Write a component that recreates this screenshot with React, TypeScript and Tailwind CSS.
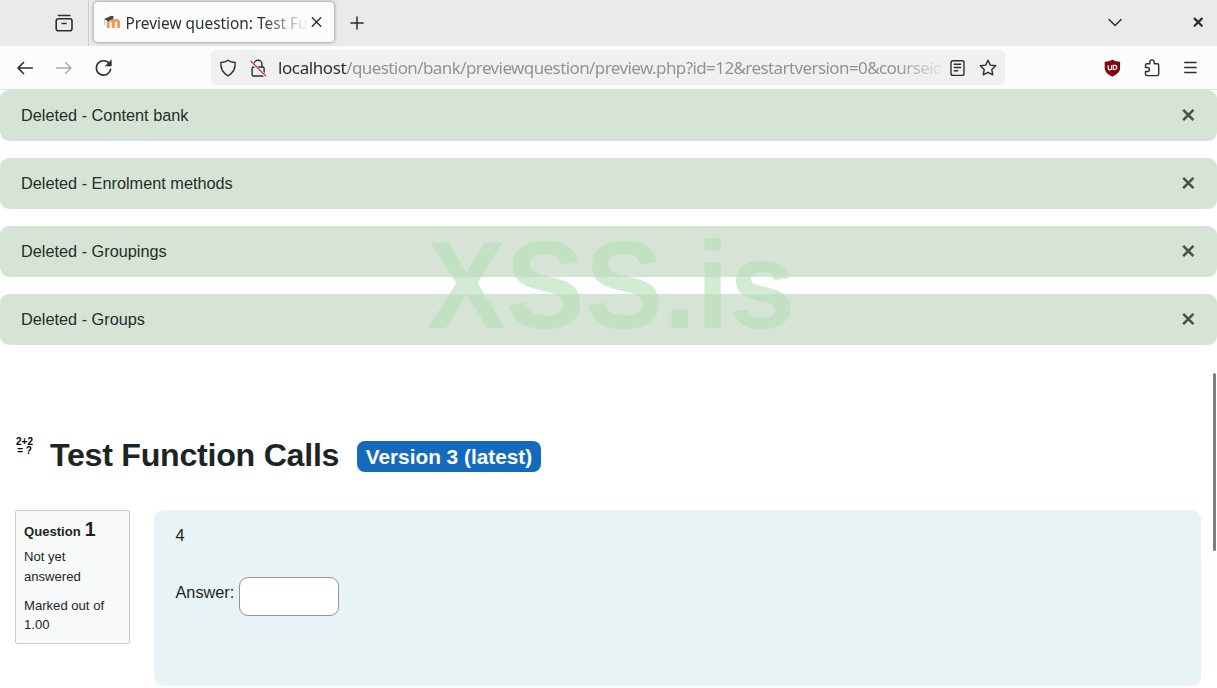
import React from 'react';

const alerts = ['Deleted - Content bank', 'Deleted - Enrolment methods', 'Deleted - Groupings', 'Deleted - Groups'];

interface IconProps {
  className?: string;
  children: React.ReactNode;
}

const Icon: React.FC<IconProps> = ({ className = '', children }) => (
  <svg
    viewBox="0 0 18 18"
    width="18"
    height="18"
    fill="none"
    stroke="currentColor"
    strokeWidth="1.4"
    strokeLinecap="round"
    strokeLinejoin="round"
    className={`shrink-0 ${className}`}
  >
    {children}
  </svg>
);

const MoodleIcon = () => (
  <svg viewBox="0 0 18 14" width="18" height="14" className="shrink-0">
    <path
      d="M5.200 13V8c0-1.800.8-2.700 2.500-2.700S10.300 6.200 10.300 8v5M10.300 8c0-1.800.9-2.700 2.600-2.700S15.600 6.200 15.600 8v5"
      fill="none"
      stroke="#f2995c"
      strokeWidth="3"
    />
    <path d="M1 4.100 8.500.8l2.400.6-1.100 3.200C7.600 4.200 6.400 5 5.500 6.500L3 5.100z" fill="#3f4541" />
    <path d="M1.600 4.800v5" stroke="#a9aeab" strokeWidth=".8" />
  </svg>
);

const TabBar = () => (
  <div className="flex h-[46px] items-center bg-[#eaeaea]">
    <div className="flex h-full w-[89px] items-center border-r border-[#cdcfcd] pl-[55px]">
      <Icon>
        <rect x="1.200" y="4.800" width="15.800" height="12" rx="2.300" strokeWidth="1.600" />
        <path d="M3.300 1.400h11.600" strokeWidth="1.500" />
        <path d="M7.200 9.400h3.800" strokeWidth="1.500" />
      </Icon>
    </div>
    <div className="mb-[2px] ml-[5px] flex h-[40px] w-[240px] items-center rounded-[4px] bg-[#fcfcfc] pl-[9px] shadow-[0_0_3px_1px_rgba(90,110,90,0.5)]">
      <MoodleIcon />
      <div className="mt-[3px] ml-[4.500px] w-[180.500px] overflow-hidden whitespace-nowrap text-[15.400px] [mask-image:linear-gradient(to_right,black_135px,transparent_183px)]">
        Preview question: Test Function Calls
      </div>
      <Icon className="ml-[2px]">
        <path d="m4.300 4.800 8.400 8.400M12.700 4.800l-8.400 8.400" />
      </Icon>
    </div>
    <Icon className="ml-[14px]">
      <path d="M9 2.900v12.200M2.900 9h12.200" strokeWidth="1.500" />
    </Icon>
    <Icon className="ml-auto">
      <path d="m3.100 5.500 6 6 6-6" strokeWidth="1.500" />
    </Icon>
    <Icon className="mr-[10px] ml-[65px]">
      <path d="m5.600 4.600 7.200 7.200M12.800 4.600l-7.200 7.200" strokeWidth="2.200" />
    </Icon>
  </div>
);

const AddressBar = () => (
  <div className="ml-[98px] flex h-[35px] w-[794px] items-center rounded-[5px] bg-[#f0f0f0] pl-[8px]">
    <Icon>
      <path d="M9 1.200c2 1.500 4.300 2.100 7.100 2.300.5 5.300-1.600 10.200-7.100 13.300C3.500 13.700 1.400 8.800 1.900 3.500 4.700 3.300 7 2.700 9 1.200z" />
    </Icon>
    <Icon className="ml-[12px]">
      <rect x="3.100" y="8" width="12" height="9" rx="1.500" />
      <path d="M5 8V5.200a4 4 0 0 1 8 0V8" />
      <path d="m1.600 2.600 14.600 14" stroke="#f0f0f0" strokeWidth="3" />
      <path d="m2 2.200 14.600 14.600" stroke="#d14455" strokeWidth="1.500" />
    </Icon>
    <div className="ml-[11px] w-[663px] overflow-hidden whitespace-nowrap text-[17px] tracking-[-0.590px] text-[#8e9690] [mask-image:linear-gradient(to_right,black_620px,transparent_668px)]">
      <span className="tracking-[-0.400px] text-[#27312d]">localhost</span>
      /question/bank/previewquestion/preview.php?id=12&amp;restartversion=0&amp;courseid=2
    </div>
    <Icon className="ml-[7px]">
      <rect x="3" y="1.800" width="13" height="14.600" rx="2" />
      <path d="M6.300 5.200h6.300M6.300 8.500h6.300M6.300 11.800h3.500" />
    </Icon>
    <Icon className="ml-[13px]">
      <path d="m9 1.200 2.350 4.900 5.350.7-3.900 3.750.95 5.350L9 13.350 4.250 15.900l.95-5.350L1.300 6.800l5.350-.7z" />
    </Icon>
  </div>
);

const Toolbar = () => (
  <div className="flex h-[44px] items-center border-b border-[#dfe2df] bg-[#fcfcfc] pl-[16px]">
    <Icon>
      <path d="M16.300 9H2M7.500 3.500 2 9l5.500 5.500" strokeWidth="1.600" />
    </Icon>
    <Icon className="ml-[21px] text-[#a3aaa5]">
      <path d="M1.500 9h14.500M10.500 3.500 16 9l-5.500 5.500" />
    </Icon>
    <Icon className="ml-[22px]">
      <path d="M14.800 5.300A7.200 7.200 0 1 0 15.600 10.400" strokeWidth="1.600" />
      <path d="M16.300 1.300v5.600h-5.600z" fill="currentColor" strokeWidth=".6" />
    </Icon>
    <AddressBar />
    <svg viewBox="0 0 18 18" width="18" height="18" className="ml-[98px] shrink-0">
      <path d="M9.400.6c2.300 1.600 4.500 2.100 7.700 2.200v6c0 4.300-3.200 6.900-7.700 8.900-4.500-2-7.700-4.600-7.700-8.900v-6C4.900 2.700 7.100 2.200 9.400.6z" fill="#800610" />
      <path d="M5.200 6.200v3c0 2.100 3.300 2.100 3.300 0v-3M10.200 6.300v4.200h1.500a2.100 2.100 0 0 0 0-4.200z" fill="none" stroke="#fff" strokeWidth="1.200" />
    </svg>
    <Icon className="ml-[22px]">
      <path d="M2.500 6.800V5.900q0-1.200 1.200-1.200h3.100V3.100a2.200 2.200 0 0 1 4.400 0v1.600h3.100q1.400 0 1.400 1.400v9q0 1.500-1.500 1.500H4q-1.500 0-1.500-1.500v-2.600h1.900a2 2 0 0 0 0-4H2.500z" />
    </Icon>
    <Icon className="ml-[20px]">
      <path d="M3.200 3.500h12.400M3.200 8.500h12.400M3.200 13.500h12.400" strokeLinecap="butt" strokeWidth="1.300" />
    </Icon>
  </div>
);

const Alert: React.FC<{ text: string }> = ({ text }) => (
  <div className="flex h-[50.500px] items-center justify-between rounded-[9px] bg-[#d6e4d6] pr-[20px] pb-[1px] pl-[21px] text-[16.300px] text-[#252d2a]">
    <span>{text}</span>
    <Icon className="text-[#49514b]">
      <path d="m4.200 3.900 10.200 10.200M14.400 3.900l-10.200 10.200" strokeLinecap="butt" strokeWidth="2.600" />
    </Icon>
  </div>
);

const Question = () => (
  <div className="mt-[34px] flex items-start pr-[16.500px] pl-[15px]">
    <div className="h-[134px] w-[115px] shrink-0 rounded-[2px] border border-[#c9d0ca] bg-[#f8faf9] pt-[6px] pl-[8px] text-[13.100px] leading-[19.500px]">
      <h3 className="flex h-[24px] items-baseline gap-[4px] font-bold leading-[24px]">
        Question <span className="text-[19.500px]">1</span>
      </h3>
      <div className="mt-[6px]">Not yet<br />answered</div>
      <div className="mt-[9.500px]">Marked out of<br />1.00</div>
    </div>
    <div className="ml-[24px] h-[176px] grow rounded-[9px] bg-[#e7f3f5] pt-[12.500px] pl-[21.500px] text-[16.300px] leading-[24px]">
      <p>4</p>
      <div className="mt-[30.500px] flex items-start">
        <label htmlFor="answer" className="pt-[3px]">Answer:</label>
        <input id="answer" type="text" className="ml-[5px] h-[39px] w-[99.500px] rounded-[9px] border border-[#8f9592] bg-white" />
      </div>
    </div>
  </div>
);

export default function App() {
  return (
    <div className="relative h-[688px] w-[1217px] overflow-hidden bg-white text-[#1d2524]">
      <header className="font-['Noto_Sans',sans-serif] text-[#27312d]">
        <TabBar />
        <Toolbar />
      </header>
      <main className="font-['Liberation_Sans',Arial,sans-serif]">
        <div className="flex flex-col gap-[17.500px]">
          {alerts.map((text) => (
            <Alert key={text} text={text} />
          ))}
        </div>
        <div className="mt-[90.500px] flex h-[41px] items-start pl-[15px]">
          <div className="mt-[1.500px] w-[19px] text-center text-[10px] font-bold leading-[9px] text-black">
            2+2<br />= ?
          </div>
          <h2 className="ml-[16px] text-[32.200px] font-bold leading-[41px] tracking-[-0.280px] whitespace-nowrap">Test Function Calls</h2>
          <span className="mt-[6px] ml-[18px] flex h-[31px] w-[183.500px] items-center justify-center rounded-[8px] bg-[#146bbd] text-[20.800px] font-bold whitespace-nowrap text-white">
            Version 3 (latest)
          </span>
        </div>
        <Question />
      </main>
      <div className="pointer-events-none absolute top-[226px] left-[427px] scale-y-[1.045] font-['Liberation_Sans',Arial,sans-serif] text-[118.200px] leading-[118px] font-bold whitespace-nowrap text-[rgba(182,222,184,0.62)]">
        XSS.is
      </div>
      <div className="absolute top-[373px] right-[1px] h-[178px] w-[3px] rounded-full bg-[#788079]" />
    </div>
  );
}
